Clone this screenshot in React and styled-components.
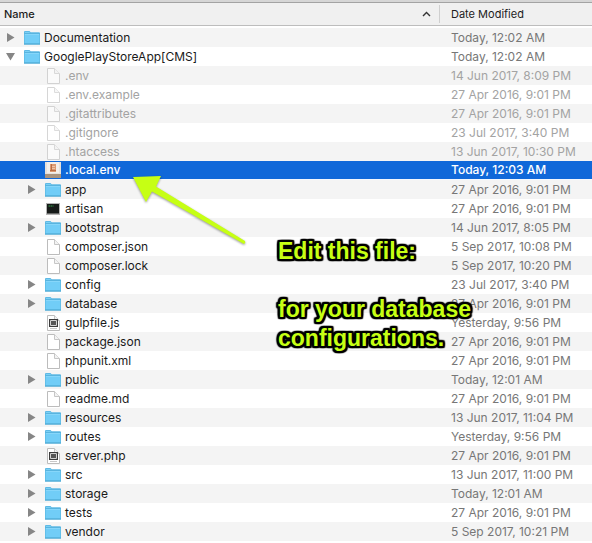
import React from "react";
import styled, { createGlobalStyle, css } from "styled-components";

const GlobalStyle = createGlobalStyle`
  * { box-sizing: border-box; }
  body {
    margin: 0;
    background: #fff;
    font-family: Inter, "Liberation Sans", sans-serif;
    font-size: 12px;
  }
`;

const Window = styled.main`
  position: relative;
  overflow: hidden;
  border-top: 2px solid #d6d6d6;
`;

const FileTable = styled.table`
  width: 100%;
  table-layout: fixed;
  border-collapse: separate;
  border-spacing: 0;
`;

const NameColumn = styled.col``;

const DateColumn = styled.col`
  width: 152px;
`;

const HeadCell = styled.th`
  height: 24px;
  padding: 0;
  background: #f0f0f0;
  border-top: 1px solid #a3a3a3;
  border-bottom: 1px solid #bdbdbd;
  color: #1c1c1c;
  font-size: 11px;
  font-weight: ${(p) => (p.$sorted ? 500 : 400)};
  text-align: left;
`;

const HeadContent = styled.div`
  display: flex;
  align-items: center;
  justify-content: space-between;
  height: 18px;
  padding: 0 8px 0 4px;
  border-right: 1px solid #cfcfcf;
`;

const DateHead = styled.div`
  padding-left: 11px;
  line-height: 18px;
`;

const Body = styled.tbody`
  &::before {
    content: "";
    display: block;
    height: 2px;
  }
`;

const Row = styled.tr`
  color: #1a1a1a;
  background: #fff;
  &:nth-child(odd) { background: #f4f4f4; }
  ${(p) => p.$dimmed && css`color: #a3a3a3;`}
  ${(p) => p.$selected && css`
    color: #fff;
    font-weight: 500;
  `}
`;

const Cell = styled.td`
  height: 19px;
  padding: 0;
  line-height: 18px;
  white-space: nowrap;
  ${(p) => p.$selected && css`
    background: #1068d9;
    border-bottom: 1px solid #f4f8fe;
  `}
`;

const DateCell = styled(Cell)`
  padding-left: 11px;
  color: ${(p) => (p.$selected ? "#fff" : p.$dimmed ? "#a3a3a3" : "#777")};
`;

const Entry = styled.div`
  display: flex;
  align-items: center;
  height: 18px;
  padding-left: ${(p) => (p.$nested ? 25 : 4)}px;
`;

const Disclosure = styled.button`
  display: flex;
  align-items: center;
  justify-content: center;
  width: 13px;
  height: 18px;
  padding: 0;
  border: 0;
  background: none;
`;

const Gutter = styled.span`
  width: 13px;
`;

const IconSlot = styled.span`
  display: flex;
  justify-content: center;
  width: 18px;
  margin: 0 3px 0 6px;
  opacity: ${(p) => (p.$dimmed ? 0.6 : 1)};
`;

const Icon = styled.svg`
  display: block;
  flex: none;
`;

const Annotation = styled.aside`
  position: absolute;
  left: 278px;
  top: 235px;
  width: 220px;
  color: #c6ff14;
  font: bold 23px/29px "Liberation Sans", Arial, sans-serif;
  text-shadow:
    2px 0 1px #000, -2px 0 1px #000, 0 2px 1px #000, 0 -2px 1px #000,
    2px 1px 1px #000, -2px 1px 1px #000, 2px -1px 1px #000, -2px -1px 1px #000,
    1px 2px 1px #000, -1px 2px 1px #000, 1px -2px 1px #000, -1px -2px 1px #000,
    2px 2px 1px #000, -2px 2px 1px #000, 2px -2px 1px #000, -2px -2px 1px #000;
  pointer-events: none;
`;

const Note = styled.p`
  margin: 0 0 29px;
`;

const Arrow = styled.svg`
  position: absolute;
  left: 128px;
  top: 168px;
  pointer-events: none;
  filter: drop-shadow(0 1px 1px rgba(0, 0, 0, 0.4));
`;

function FolderIcon() {
  return (
    <Icon width="16" height="16" viewBox="0 0 16 16">
      <path d="M0 14.5V2q0-1 1-1h4.5l1.200 1.300H15q1 0 1 1v11.200z" fill="#5eb9e5" />
      <path d="M0 4h16v9.600H0z" fill="#71cdf7" />
      <path d="M1 2h4.200l1.100 1.200H15v.8H1z" fill="#7bd0f4" />
      <path d="M0 3.500h16" stroke="#58b4df" />
      <path d="M0 4.500h16" stroke="#86d6fa" />
      <path d="M.5 4v10M15.500 4v10" stroke="#62bfe9" />
      <path d="M0 14h16" stroke="#4aa6d0" />
    </Icon>
  );
}

function FileIcon({ script }) {
  return (
    <Icon width="13" height="16" viewBox="0 0 13 16">
      <path d="M.5.5h7l5 5v10H.5z" fill="#fff" stroke="#bcbcbc" />
      <path d="M7.500.5v5h5" fill="#f3f3f3" stroke="#c6c6c6" />
      {script && (
        <>
          <path d="M2 4h9v8H2z" fill="#3c3c3c" />
          <path d="M3.500 5.500h6v5h-6z" fill="#555" stroke="#d2d2d2" />
          <path d="M3 13.500h7" stroke="#c8c8c8" />
        </>
      )}
    </Icon>
  );
}

function EnvIcon() {
  return (
    <Icon width="16" height="16" viewBox="0 0 16 16">
      <path d="M0 0h16v16H0z" fill="#a8937f" />
      <path d="M0 0h16v12H0z" fill="#e6e1dc" />
      <path d="M2 0h12v11H2z" fill="#f3efeb" />
      <path d="M5 2h6v8H5z" fill="#dc9a72" />
      <path d="M6.500 2v6M5 8.500h6" stroke="#b96c46" />
      <path d="M7 4.500h3M7 6.500h3" stroke="#efc5a8" />
    </Icon>
  );
}

function TerminalIcon() {
  return (
    <Icon width="14" height="14" viewBox="0 0 14 14">
      <path d="M0 1h14v12H0z" fill="#b4b4b4" />
      <path d="M1 2h12v9.500H1z" fill="#171b19" />
      <path d="M2.500 4h5" stroke="#36a34f" strokeDasharray="1.500 .5" />
    </Icon>
  );
}

const icons = {
  folder: <FolderIcon />,
  file: <FileIcon />,
  script: <FileIcon script />,
  env: <EnvIcon />,
  terminal: <TerminalIcon />,
};

const files = [
  { name: "Documentation", date: "Today, 12:02 AM", icon: "folder", root: true },
  { name: "GooglePlayStoreApp[CMS]", date: "Today, 12:02 AM", icon: "folder", root: true, open: true },
  { name: ".env", date: "14 Jun 2017, 8:09 PM", icon: "file", dimmed: true },
  { name: ".env.example", date: "27 Apr 2016, 9:01 PM", icon: "file", dimmed: true },
  { name: ".gitattributes", date: "27 Apr 2016, 9:01 PM", icon: "file", dimmed: true },
  { name: ".gitignore", date: "23 Jul 2017, 3:40 PM", icon: "file", dimmed: true },
  { name: ".htaccess", date: "13 Jun 2017, 10:30 PM", icon: "file", dimmed: true },
  { name: ".local.env", date: "Today, 12:03 AM", icon: "env", selected: true },
  { name: "app", date: "27 Apr 2016, 9:01 PM", icon: "folder" },
  { name: "artisan", date: "27 Apr 2016, 9:01 PM", icon: "terminal" },
  { name: "bootstrap", date: "14 Jun 2017, 8:05 PM", icon: "folder" },
  { name: "composer.json", date: "5 Sep 2017, 10:08 PM", icon: "file" },
  { name: "composer.lock", date: "5 Sep 2017, 10:20 PM", icon: "file" },
  { name: "config", date: "23 Jul 2017, 3:40 PM", icon: "folder" },
  { name: "database", date: "27 Apr 2016, 9:01 PM", icon: "folder" },
  { name: "gulpfile.js", date: "Yesterday, 9:56 PM", icon: "script" },
  { name: "package.json", date: "27 Apr 2016, 9:01 PM", icon: "file" },
  { name: "phpunit.xml", date: "27 Apr 2016, 9:01 PM", icon: "file" },
  { name: "public", date: "Today, 12:01 AM", icon: "folder" },
  { name: "readme.md", date: "27 Apr 2016, 9:01 PM", icon: "file" },
  { name: "resources", date: "13 Jun 2017, 11:04 PM", icon: "folder" },
  { name: "routes", date: "Yesterday, 9:56 PM", icon: "folder" },
  { name: "server.php", date: "27 Apr 2016, 9:01 PM", icon: "script" },
  { name: "src", date: "13 Jun 2017, 11:00 PM", icon: "folder" },
  { name: "storage", date: "Today, 12:01 AM", icon: "folder" },
  { name: "tests", date: "27 Apr 2016, 9:01 PM", icon: "folder" },
  { name: "vendor", date: "5 Sep 2017, 10:21 PM", icon: "folder" },
];

function FileRow({ file }) {
  const { name, date, icon, root, open, dimmed, selected } = file;
  return (
    <Row $dimmed={dimmed} $selected={selected} aria-selected={!!selected}>
      <Cell $selected={selected}>
        <Entry $nested={!root}>
          {icon === "folder" ? (
            <Disclosure type="button" aria-label={name} aria-expanded={!!open}>
              <Icon width="9" height="9" viewBox="0 0 9 9">
                <path d={open ? "M0 1h9L4.500 8.500z" : "M1 0v9l7.500-4.500z"} fill="#868686" />
              </Icon>
            </Disclosure>
          ) : (
            <Gutter />
          )}
          <IconSlot $dimmed={dimmed}>{icons[icon]}</IconSlot>
          <span>{name}</span>
        </Entry>
      </Cell>
      <DateCell $dimmed={dimmed} $selected={selected}>{date}</DateCell>
    </Row>
  );
}

export default function App() {
  return (
    <>
      <GlobalStyle />
      <Window>
        <FileTable>
          <colgroup>
            <NameColumn />
            <DateColumn />
          </colgroup>
          <thead>
            <tr>
              <HeadCell scope="col" $sorted aria-sort="ascending">
                <HeadContent>
                  Name
                  <Icon width="9" height="6" viewBox="0 0 9 6">
                    <path d="M1 5l3.500-3.500L8 5" fill="none" stroke="#333" strokeWidth="1.400" />
                  </Icon>
                </HeadContent>
              </HeadCell>
              <HeadCell scope="col">
                <DateHead>Date Modified</DateHead>
              </HeadCell>
            </tr>
          </thead>
          <Body>
            {files.map((file) => (
              <FileRow key={file.name} file={file} />
            ))}
          </Body>
        </FileTable>
        <Arrow width="122" height="80" viewBox="0 0 122 80">
          <path d="M5 7L33 6 28 16.500 117 71q1 2-1 3L24 21.500 18 32z" fill="#c6ff14" />
        </Arrow>
        <Annotation>
          <Note>Edit this file:</Note>
          <Note>for your database configurations.</Note>
        </Annotation>
      </Window>
    </>
  );
}
